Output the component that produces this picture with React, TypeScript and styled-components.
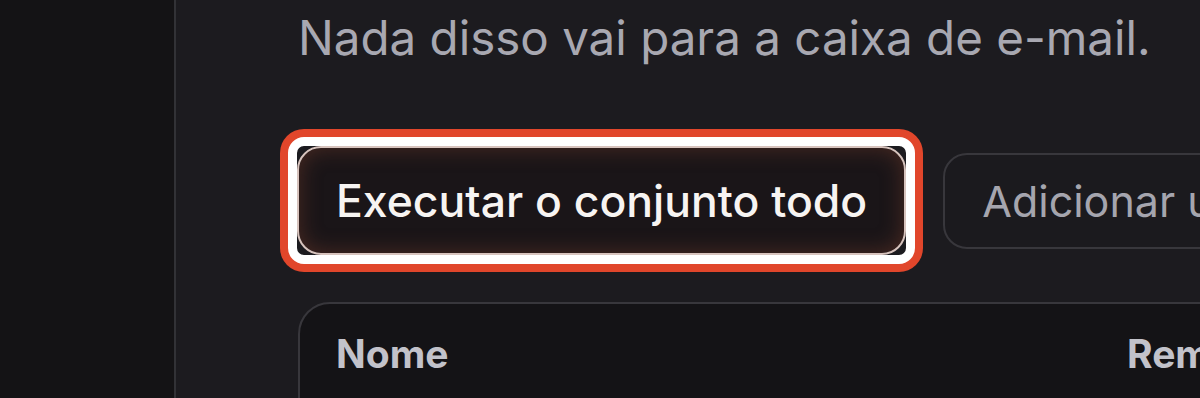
import styled, { createGlobalStyle } from 'styled-components';

const Global = createGlobalStyle`
  html, body {
    margin: 0;
    padding: 0;
    background: #1c1b1f;
  }
  body {
    font-family: Inter, "Noto Sans", "Liberation Sans", sans-serif;
    -webkit-font-smoothing: antialiased;
  }
`;

const App = () => {
  return (
    <>
      <Global />
      <Page>
        <Sidebar />
        <Main>
          <Lead>Nada disso vai para a caixa de e-mail.</Lead>
          <Actions>
            <Highlight>
              <Button primary>Executar o conjunto todo</Button>
            </Highlight>
            <Button>Adicionar um teste</Button>
          </Actions>
          <Card>
            <HeadRow>
              <HeadCell>Nome</HeadCell>
              <HeadCell>Remetente</HeadCell>
              <HeadCell>Estado</HeadCell>
            </HeadRow>
          </Card>
        </Main>
      </Page>
    </>
  );
};

// Styled Components
const Page = styled.div`
  display: flex;
  height: 398px;
  overflow: hidden;
  background: #1c1b1f;
`;

const Sidebar = styled.aside`
  width: 174px;
  flex-shrink: 0;
  background: #141315;
  border-right: 2px solid #323236;
`;

const Main = styled.main`
  flex: 1;
  min-width: 0;
  padding: 8px 0 0 122px;
  overflow: hidden;
`;

const Lead = styled.p`
  margin: 0;
  font-size: 47.5px;
  line-height: 60px;
  color: #a8a8b1;
  white-space: nowrap;
`;

const Actions = styled.div`
  display: flex;
  align-items: center;
  gap: 28px;
  margin-top: 69px;
`;

// annotation ring drawn round the active button
const Highlight = styled.span`
  display: inline-flex;
  flex-shrink: 0;
  margin-left: -10px;
  border: 9px solid #ffffff;
  border-radius: 16px;
  background: #1c1b1f;
  box-shadow: 0 0 0 8px #e1462b;
`;

const Button = styled.button<{ primary?: boolean }>`
  flex-shrink: 0;
  height: ${(p) => (p.primary ? '109px' : '96px')};
  padding: 0 37px;
  border-radius: 24px;
  font-family: inherit;
  font-size: ${(p) => (p.primary ? '44.5px' : '43px')};
  font-weight: ${(p) => (p.primary ? 500 : 400)};
  white-space: nowrap;
  color: ${(p) => (p.primary ? '#f7f4f2' : '#a5a5ae')};
  background: ${(p) => (p.primary ? '#1a1518' : '#1b1a1e')};
  border: 2px solid ${(p) => (p.primary ? '#d7c3bd' : '#38373c')};
  box-shadow: ${(p) =>
    p.primary ? 'inset 0 0 22px rgba(150, 75, 50, 0.4)' : 'none'};
`;

const Card = styled.div`
  margin-top: 38px;
  width: 1100px;
  height: 200px;
  background: #141316;
  border: 2px solid #38373c;
  border-radius: 32px;
  padding: 20px 36px 0;
`;

const HeadRow = styled.div`
  display: grid;
  grid-template-columns: 791px 360px 300px;
`;

const HeadCell = styled.div`
  font-size: 39px;
  line-height: 60px;
  font-weight: 700;
  color: #c2c2ca;
  white-space: nowrap;
`;

export default App;
